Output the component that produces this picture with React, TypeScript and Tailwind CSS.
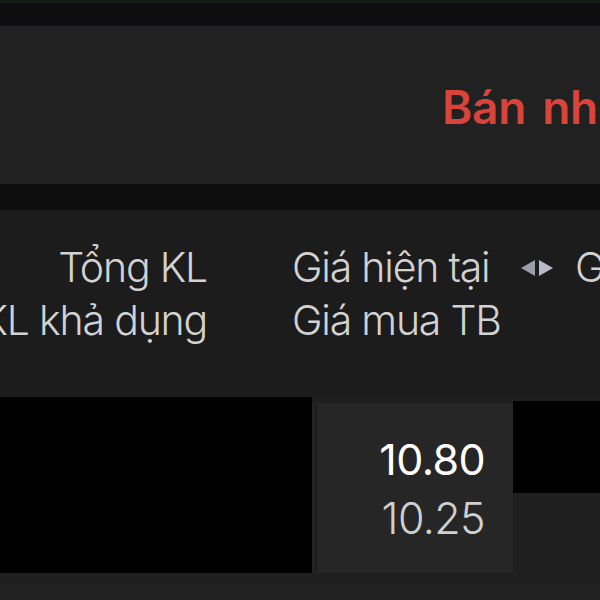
const SortArrows = () => (
  <svg width="34" height="20" viewBox="0 0 34 20" className="shrink-0">
    <polygon points="15,2 15,18 1,10" fill="#9c9cab" />
    <polygon points="19,2 19,18 33,10" fill="#b9b9c9" />
  </svg>
);

const App = () => {
  return (
    <div
      className="w-[600px] h-[600px] overflow-hidden bg-[#1c1c1c] flex flex-col"
      style={{ fontFamily: "Inter, 'Noto Sans', sans-serif" }}
    >
      {/* status strip */}
      <div className="h-[3px] bg-[#141a14]" />
      <div className="h-[23px] bg-[#0e0e11]" />

      {/* action panel */}
      <div className="h-[158px] bg-[#212121] flex items-center pl-[442px] overflow-hidden">
        <span className="text-[46px] font-semibold text-[#d8433a] whitespace-nowrap tracking-[-0.3px] [word-spacing:5px] leading-none mt-[4px]">
          Bán nhanh
        </span>
      </div>

      <div className="h-[26px] bg-[#0e0e0e]" />

      {/* table header */}
      <div className="h-[187px] flex items-start pt-[31px] text-[#d2d2d2] text-[41px] font-light leading-[53px] tracking-[-1.2px] whitespace-nowrap overflow-hidden">
        <div className="w-[207px] shrink-0 flex flex-col items-end">
          <span>Tổng KL</span>
          <span>KL khả dụng</span>
        </div>
        <div className="ml-[85px] w-[208px] shrink-0 flex flex-col">
          <span>Giá hiện tại</span>
          <span>Giá mua TB</span>
        </div>
        <div className="ml-[20px] h-[53px] flex items-center">
          <SortArrows />
        </div>
        <div className="ml-[21px] flex flex-col">
          <span>Giá</span>
        </div>
      </div>

      {/* data row */}
      <div className="flex items-start h-[176px] bg-[#1f1f1f]">
        <div className="w-[312px] h-[185px] bg-black shrink-0" />
        <div className="w-[4px] h-[176px] bg-[#1d1d1d] border-l border-[#2a2a2a] ml-[1px] mt-[6px]" />
        <div className="w-[196px] h-[170px] mt-[6px] bg-[#262626] flex flex-col items-end justify-center pr-[28px] pt-[2px] tracking-[-0.6px]">
          <span className="text-[43px] leading-[59px] font-normal text-white">10.80</span>
          <span className="text-[43px] leading-[59px] font-light text-[#d0d0d0]">10.25</span>
        </div>
        <div className="flex-1 h-[92px] mt-[4px] bg-black" />
      </div>
      <div className="h-[10px] bg-[#1f1f1f]" />
      <div className="flex-1 bg-[#222222] border-t border-[#1a1a1a]" />
    </div>
  );
};

export default App;
